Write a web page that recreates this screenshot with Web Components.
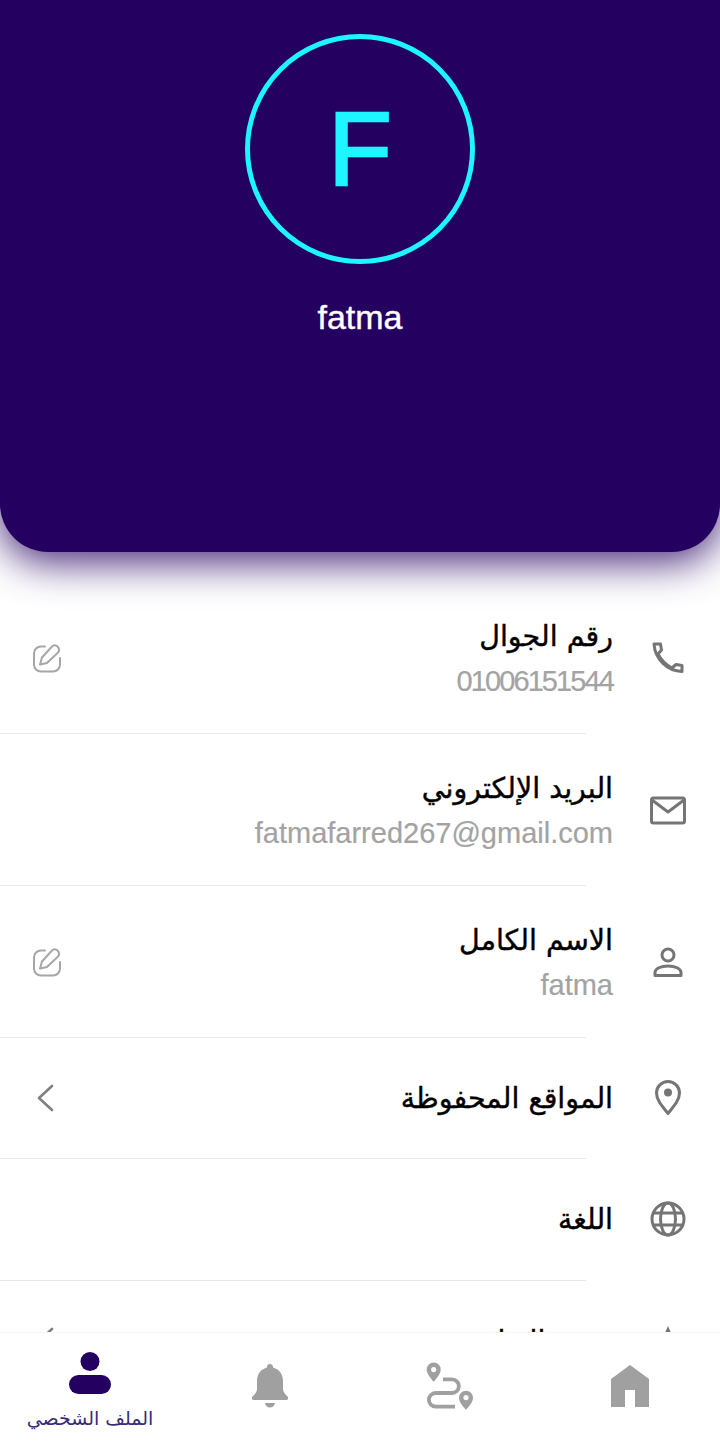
<!DOCTYPE html>
<html lang="ar" dir="rtl">
<head>
<meta charset="utf-8">
<title>الملف الشخصي</title>
<style>
  html, body { margin: 0; height: 100%; background: #fff; }
  body { overflow: hidden; font-family: "DejaVu Sans", "Liberation Sans", sans-serif; }
  .digits { letter-spacing: -1.9px; }
</style>
</head>
<body>
<profile-page>
  <profile-header slot="header" initial="F" name="fatma"></profile-header>

  <profile-row icon="phone" action="edit">
    <span slot="title">رقم الجوال</span>
    <span slot="sub" class="digits">01006151544</span>
  </profile-row>
  <profile-row icon="mail">
    <span slot="title">البريد الإلكتروني</span>
    <span slot="sub">fatmafarred267@gmail.com</span>
  </profile-row>
  <profile-row icon="person" action="edit">
    <span slot="title">الاسم الكامل</span>
    <span slot="sub">fatma</span>
  </profile-row>
  <profile-row icon="pin" action="chevron">
    <span slot="title">المواقع المحفوظة</span>
  </profile-row>
  <profile-row icon="globe">
    <span slot="title">اللغة</span>
  </profile-row>
  <profile-row icon="star" action="chevron">
    <span slot="title">تقييم التطبيق</span>
  </profile-row>

  <bottom-nav slot="nav">
    <nav-item icon="home"></nav-item>
    <nav-item icon="route"></nav-item>
    <nav-item icon="bell"></nav-item>
    <nav-item icon="user" active>الملف الشخصي</nav-item>
  </bottom-nav>
</profile-page>

<script>
(() => {
  "use strict";

  const icons = {
    phone: `<svg width="32" height="32" viewBox="0 0 32 32" fill="none" stroke="currentColor" stroke-width="3" stroke-linejoin="round" stroke-linecap="round">
      <path d="M2 2h6.500l1 6L6 12c3 6 8 11 14 14l4-3.500 6 1v6C15 29 3 17 2 2z"/></svg>`,
    mail: `<svg width="36" height="30" viewBox="0 0 36 30" fill="none" stroke="currentColor" stroke-width="3" stroke-linejoin="round">
      <rect x="1.500" y="3" width="33" height="25" rx="2"/><path d="M2 5l16 12L34 5"/></svg>`,
    person: `<svg width="30" height="30" viewBox="0 0 30 30" fill="none" stroke="currentColor" stroke-width="3" stroke-linejoin="round">
      <circle cx="15" cy="8" r="6"/><path d="M2 28.500v-3c0-4 6-6.500 13-6.500s13 2.500 13 6.500v3z"/></svg>`,
    pin: `<svg width="26" height="36" viewBox="0 0 26 36" fill="none" stroke="currentColor" stroke-width="3" stroke-linejoin="round">
      <path d="M13 33.500C7 26 1.500 20 1.500 13a11.500 11.500 0 0 1 23 0c0 7-5.500 13-11.500 20.500z"/><circle cx="13" cy="12.500" r="4" fill="currentColor" stroke="none"/></svg>`,
    globe: `<svg width="36" height="36" viewBox="0 0 36 36" fill="none" stroke="currentColor" stroke-width="3">
      <circle cx="18" cy="18" r="16"/><ellipse cx="18" cy="18" rx="7.500" ry="16"/><path d="M3.500 12h29M3.500 24h29"/></svg>`,
    star: `<svg width="36" height="36" viewBox="0 0 24 24" fill="currentColor"><path d="M12 2l2.900 6.600 7.100.7-5.400 4.700 1.600 7L12 17l-6.200 3.900 1.600-7L2 9.300l7.100-.7z"/></svg>`,
    edit: `<svg width="30" height="30" viewBox="0 0 30 30" fill="none" stroke="#a6a6a6" stroke-width="2" stroke-linejoin="round" stroke-linecap="round">
      <path d="M13 3.500H9a7 7 0 0 0-7 7v11a7 7 0 0 0 7 7h12a7 7 0 0 0 7-7V15"/>
      <path d="M8 21.500l2-7L19.500 4c2-2 4.500-2 6-.5s2 4 .5 6L15 20z"/></svg>`,
    chevron: `<svg width="30" height="30" viewBox="0 0 30 30" fill="none" stroke="#808080" stroke-width="2.600" stroke-linecap="round" stroke-linejoin="round"><path d="M20 3L7 15l13 12"/></svg>`,
    home: `<svg width="38" height="42" viewBox="0 0 38 42" fill="currentColor"><path d="M19 0l19 14v28H24V25H14v17H0V14z"/></svg>`,
    route: `<svg width="50" height="50" viewBox="0 0 50 50" fill="none">
      <path d="M18 18.300h9a6.800 6.800 0 0 1 0 13.700H10.700a6.800 6.800 0 0 0 0 13.600H30" stroke="currentColor" stroke-width="3.800"/>
      <path fill-rule="evenodd" fill="currentColor" d="M8.700 20.700C5 16.500 1.700 12.500 1.700 8.500a7 7 0 0 1 14 0c0 4-3.300 8-7 12.200zm0-14.700a2.600 2.600 0 1 0 0 5.200 2.600 2.600 0 0 0 0-5.200z"/>
      <path fill-rule="evenodd" fill="currentColor" d="M41 48.700c-3.700-4.200-7-8-7-12a7 7 0 0 1 14 0c0 4-3.300 7.800-7 12zm0-14.700a2.600 2.600 0 1 0 0 5.200 2.600 2.600 0 0 0 0-5.200z"/></svg>`,
    bell: `<svg width="36" height="45" viewBox="0 0 36 45" fill="currentColor">
      <path d="M18 0a3 3 0 0 1 3 3.500C28 5.500 31 11 31 17v8c0 3 2 5 5 8 .5 2-.5 3-2 3H2c-1.500 0-2.500-1-2-3 3-3 5-5 5-8v-8C5 11 8 5.500 15 3.500A3 3 0 0 1 18 0z"/>
      <path d="M13 39h10c-1 6-9 6-10 0z"/></svg>`,
    user: `<svg width="42" height="42" viewBox="0 0 42 42" fill="currentColor"><circle cx="21" cy="9.500" r="9.500"/><rect x="0" y="23" width="42" height="19" rx="9.500"/></svg>`,
  };

  class AppIcon extends HTMLElement {
    connectedCallback() {
      if (this.shadowRoot) return;
      const shadow = this.attachShadow({ mode: "open" });
      shadow.innerHTML = `
        <style>
          :host { display: inline-flex; align-items: center; justify-content: center; line-height: 0; }
          svg { display: block; }
        </style>
        ${icons[this.getAttribute("name")] || ""}`;
    }
  }

  class ProfilePage extends HTMLElement {
    connectedCallback() {
      if (this.shadowRoot) return;
      const shadow = this.attachShadow({ mode: "open" });
      shadow.innerHTML = `
        <style>
          :host { display: flex; flex-direction: column; height: 1445px; overflow: hidden; background: #fff; }
          .content { flex: 1; min-height: 0; overflow: hidden; }
          .list { padding-top: 30px; }
        </style>
        <div class="content">
          <slot name="header"></slot>
          <div class="list"><slot></slot></div>
        </div>
        <slot name="nav"></slot>`;
    }
  }

  class ProfileHeader extends HTMLElement {
    connectedCallback() {
      if (this.shadowRoot) return;
      const shadow = this.attachShadow({ mode: "open" });
      shadow.innerHTML = `
        <style>
          :host {
            display: block;
            position: relative;
            z-index: 1;
            height: 552px;
            box-sizing: border-box;
            padding-top: 34px;
            background: #240060;
            border-radius: 0 0 48px 48px;
            box-shadow: 0 10px 40px rgba(36, 0, 96, .85);
          }
          .wrap { display: flex; flex-direction: column; align-items: center; gap: 33px; }
          .avatar {
            width: 230px;
            height: 230px;
            box-sizing: border-box;
            border: 5px solid #1df6ff;
            border-radius: 50%;
            display: flex;
            align-items: center;
            justify-content: center;
            color: #1df6ff;
            font: 400 104px/1 "Liberation Sans", sans-serif;
            -webkit-text-stroke: 2.5px #1df6ff;
          }
          .name { color: #fff; font: 400 34px/40px "Liberation Sans", sans-serif; -webkit-text-stroke: .4px #fff; }
        </style>
        <div class="wrap">
          <div class="avatar">${this.getAttribute("initial")}</div>
          <div class="name">${this.getAttribute("name")}</div>
        </div>`;
    }
  }

  class ProfileRow extends HTMLElement {
    connectedCallback() {
      if (this.shadowRoot) return;
      const hasSub = !!this.querySelector('[slot="sub"]');
      const action = this.getAttribute("action");
      const shadow = this.attachShadow({ mode: "open" });
      shadow.innerHTML = `
        <style>
          :host { display: block; }
          .row {
            display: flex;
            align-items: center;
            height: ${hasSub ? 151 : 120.25}px;
            padding: 0 34px 0 32px;
            gap: 37px;
          }
          .lead { flex: none; width: 36px; display: flex; justify-content: center; color: #757575; }
          .text { flex: 1; min-width: 0; display: flex; flex-direction: column; gap: 6px; padding-top: 2px; }
          .title { color: #000; font: 500 28.5px/38px "DejaVu Sans", "Liberation Sans", sans-serif; -webkit-text-stroke: .4px #000; }
          .sub { color: #a3a3a3; font: 400 29px/38px "Liberation Sans", sans-serif; text-align: right; -webkit-text-stroke: .2px #a3a3a3; }
          hr { margin: 0 134px 0 0; border: 0; height: 1px; background: #e8e8e8; }
        </style>
        <div class="row">
          <div class="lead"><app-icon name="${this.getAttribute("icon")}"></app-icon></div>
          <div class="text">
            <div class="title"><slot name="title"></slot></div>
            ${hasSub ? '<div class="sub"><slot name="sub"></slot></div>' : ""}
          </div>
          ${action ? `<app-icon name="${action}"></app-icon>` : ""}
        </div>
        <hr>`;
    }
  }

  class BottomNav extends HTMLElement {
    connectedCallback() {
      if (this.shadowRoot) return;
      const shadow = this.attachShadow({ mode: "open" });
      shadow.innerHTML = `
        <style>
          :host {
            display: grid;
            position: relative;
            z-index: 2;
            flex: none;
            height: 113px;
            grid-template-columns: repeat(4, 1fr);
            background: #fff;
            border-top: 1px solid #f7f7f7;
            box-sizing: border-box;
          }
        </style>
        <slot></slot>`;
    }
  }

  class NavItem extends HTMLElement {
    connectedCallback() {
      if (this.shadowRoot) return;
      const shadow = this.attachShadow({ mode: "open" });
      shadow.innerHTML = `
        <style>
          :host {
            display: flex;
            flex-direction: column;
            align-items: center;
            justify-content: center;
            gap: 10px;
            padding-bottom: 6px;
            color: #a0a0a0;
          }
          :host([active]) { color: #240060; justify-content: flex-start; padding-top: 19px; padding-bottom: 0; }
          .label { color: #3a2a78; font: 400 19px/28px "DejaVu Sans", "Liberation Sans", sans-serif; white-space: nowrap; }
        </style>
        <app-icon name="${this.getAttribute("icon")}"></app-icon>
        ${this.hasAttribute("active") ? '<div class="label"><slot></slot></div>' : ""}`;
    }
  }

  customElements.define("app-icon", AppIcon);
  customElements.define("profile-header", ProfileHeader);
  customElements.define("profile-row", ProfileRow);
  customElements.define("nav-item", NavItem);
  customElements.define("bottom-nav", BottomNav);
  customElements.define("profile-page", ProfilePage);
})();
</script>
</body>
</html>
